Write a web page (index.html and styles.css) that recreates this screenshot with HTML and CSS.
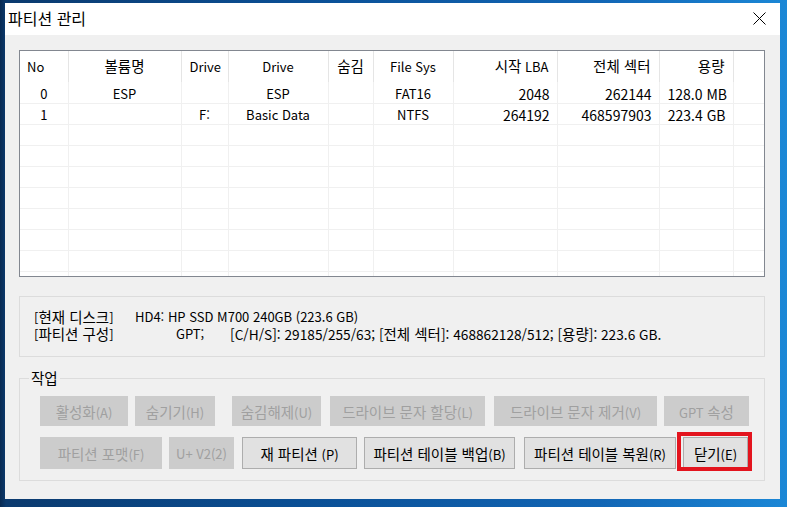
FILE: index.html
```html
<!DOCTYPE html>
<html lang="ko">
<head>
<meta charset="utf-8">
<title>파티션 관리</title>
<link rel="stylesheet" href="styles.css">
</head>
<body>
<div class="window">
  <div class="titlebar">
    <span class="title">파티션 관리</span>
    <svg class="close" width="13" height="13" viewBox="0 0 13 13"><path d="M0.5 0.5 L12.5 12.5 M12.5 0.5 L0.5 12.5" stroke="#000" stroke-width="1" fill="none"/></svg>
  </div>
  <div class="content">
    <div class="listview">
      <table class="grid">
        <colgroup>
          <col class="c1"><col class="c2"><col class="c3"><col class="c4"><col class="c5"><col class="c6"><col class="c7"><col class="c8"><col class="c9"><col class="c10">
        </colgroup>
        <thead>
          <tr>
            <th class="l">No</th><th><span class="k">볼륨명</span></th><th>Drive</th><th>Drive</th><th><span class="k">숨김</span></th><th>File Sys</th><th class="r"><span class="k">시작</span> LBA</th><th class="r"><span class="k">전체 섹터</span></th><th class="r"><span class="k">용량</span></th><th></th>
          </tr>
        </thead>
        <tbody>
          <tr><td>0</td><td>ESP</td><td></td><td>ESP</td><td></td><td>FAT16</td><td class="r num">2048</td><td class="r num">262144</td><td class="r num">128.0 MB</td><td></td></tr>
          <tr><td>1</td><td></td><td>F:</td><td>Basic Data</td><td></td><td>NTFS</td><td class="r num">264192</td><td class="r num">468597903</td><td class="r num">223.4 GB</td><td></td></tr>
          <tr><td></td><td></td><td></td><td></td><td></td><td></td><td></td><td></td><td></td><td></td></tr>
          <tr><td></td><td></td><td></td><td></td><td></td><td></td><td></td><td></td><td></td><td></td></tr>
          <tr><td></td><td></td><td></td><td></td><td></td><td></td><td></td><td></td><td></td><td></td></tr>
          <tr><td></td><td></td><td></td><td></td><td></td><td></td><td></td><td></td><td></td><td></td></tr>
          <tr><td></td><td></td><td></td><td></td><td></td><td></td><td></td><td></td><td></td><td></td></tr>
          <tr><td></td><td></td><td></td><td></td><td></td><td></td><td></td><td></td><td></td><td></td></tr>
          <tr><td></td><td></td><td></td><td></td><td></td><td></td><td></td><td></td><td></td><td></td></tr>
          <tr><td></td><td></td><td></td><td></td><td></td><td></td><td></td><td></td><td></td><td></td></tr>
        </tbody>
      </table>
    </div>

    <div class="infobox">
      <div class="inforow"><span class="ilabel">[<span class="k">현재 디스크</span>]</span><span>HD4: HP SSD M700 240GB (223.6 GB)</span></div>
      <div class="inforow"><span class="ilabel">[<span class="k">파티션 구성</span>]</span><span class="gpt">GPT;</span><span class="wide">[C/H/S]: 29185/255/63; [<span class="k">전체 섹터</span>]: 468862128/512; [<span class="k">용량</span>]: 223.6 GB.</span></div>
    </div>

    <div class="taskbox">
      <span class="legend k">작업</span>
      <div class="btnrow">
        <button class="btn dis w1"><span class="k">활성화</span>(A)</button>
        <button class="btn dis w2"><span class="k">숨기기</span>(H)</button>
        <button class="btn dis w3"><span class="k">숨김해제</span>(U)</button>
        <button class="btn dis w4"><span class="k">드라이브 문자 할당</span>(L)</button>
        <button class="btn dis w5"><span class="k">드라이브 문자 제거</span>(V)</button>
        <button class="btn dis w6">GPT <span class="k">속성</span></button>
      </div>
      <div class="btnrow row2">
        <button class="btn dis v1"><span class="k">파티션 포맷</span>(F)</button>
        <button class="btn dis v2">U+ V2(2)</button>
        <button class="btn v3"><span class="k">재 파티션</span> (P)</button>
        <button class="btn v4"><span class="k">파티션 테이블 백업</span>(B)</button>
        <button class="btn v5"><span class="k">파티션 테이블 복원</span>(R)</button>
        <span class="closewrap"><button class="btn v6"><span class="k">닫기</span>(E)</button><span class="highlight"></span></span>
      </div>
    </div>
  </div>
</div>
</body>
</html>
```

FILE: styles.css
```css
* { box-sizing: border-box; }
html, body { margin: 0; padding: 0; }
body {
  width: 787px;
  height: 507px;
  overflow: hidden;
  padding: 3px 0 0 5px;
  background: linear-gradient(90deg, #082a52 0px, #0b3a6e 6px, #0a4f95 300px, #1266b5 600px, #1b87d6 787px);
  font-family: "Noto Sans CJK KR", "Noto Sans", sans-serif;
  font-size: 13px;
  color: #000;
}
.k { font-size: 14.5px; }
.window {
  width: 775px;
  height: 496px;
  background: #f0f0f0;
  display: flex;
  flex-direction: column;
}
.titlebar {
  height: 32px;
  background: #fff;
  display: flex;
  align-items: center;
  justify-content: space-between;
  padding: 0 14px 0 3px;
}
.title { font-size: 16px; line-height: 20px; padding-bottom: 2px; }
.close { display: block; margin-top: -2px; }
.content { padding: 15px 15px 0 14px; }

.listview {
  height: 227px;
  border: 1px solid #828790;
  background: #fff;
  overflow: hidden;
}
.grid {
  table-layout: fixed;
  border-collapse: collapse;
  width: 744px;
}
.c1 { width: 48px; } .c2 { width: 113px; } .c3 { width: 47px; } .c4 { width: 100px; } .c5 { width: 45px; }
.c6 { width: 80px; } .c7 { width: 104px; } .c8 { width: 102px; } .c9 { width: 74px; } .c10 { width: 31px; }
.grid th {
  height: 31px;
  font-weight: normal;
  text-align: center;
  border-right: 1px solid #e5e5e5;
  padding: 0 8px;
  white-space: nowrap;
  line-height: 16px;
}
.grid th.l { text-align: left; padding-left: 7px; }
.grid td {
  height: 21px;
  text-align: center;
  border-right: 1px solid #f0f0f0;
  border-bottom: 1px solid #f0f0f0;
  padding: 3px 8px 0;
  white-space: nowrap;
  line-height: 16px;
}
.grid .r { text-align: right; }
.grid td.num { font-size: 14px; padding-right: 7px; }
.grid tr > :last-child { border-right: none; }

.infobox {
  margin-top: 19px;
  height: 61px;
  border: 1px solid #dcdcdc;
  padding: 11px 0 0 14px;
}
.inforow { display: flex; height: 17px; line-height: 17px; white-space: nowrap; }
.ilabel { width: 101px; }
.gpt { width: 54px; margin-left: 41px; }
.wide { font-size: 13.7px; }
.wide .k { font-size: 14.5px; }

.taskbox {
  position: relative;
  margin-top: 21px;
  height: 103px;
  border: 1px solid #dcdcdc;
  padding: 17px 0 0 20px;
}
.legend {
  position: absolute;
  top: -10px;
  left: 9px;
  padding: 0 2px;
  background: #f0f0f0;
  line-height: 17px;
}
.btnrow { display: flex; align-items: flex-start; }
.row2 { margin-top: 11px; }
.btn {
  font-family: inherit;
  font-size: 13px;
  height: 30px;
  padding: 0;
  border: 1px solid #adadad;
  background: #e1e1e1;
  color: #000;
  white-space: nowrap;
}
.row2 .btn { height: 32px; }
.btn.dis { background: #cccccc; border-color: #cccccc; color: #a0a0a0; }
.w1 { width: 88px; }
.w2 { width: 80px; margin-left: 7px; }
.w3 { width: 89px; margin-left: 17px; }
.w4 { width: 155px; margin-left: 9px; }
.w5 { width: 163px; margin-left: 9px; }
.w6 { width: 85px; margin-left: 7px; }
.v1 { width: 122px; }
.v2 { width: 65px; margin-left: 7px; }
.v3 { width: 115px; margin-left: 8px; }
.v4 { width: 151px; margin-left: 7px; }
.v5 { width: 152px; margin-left: 9px; }
.closewrap { position: relative; margin-left: 7px; display: block; }
.v6 { width: 65px; display: block; }
.highlight {
  position: absolute;
  left: -6px;
  top: -5px;
  width: 75px;
  height: 39px;
  border: 4px solid #e3141e;
}
```
